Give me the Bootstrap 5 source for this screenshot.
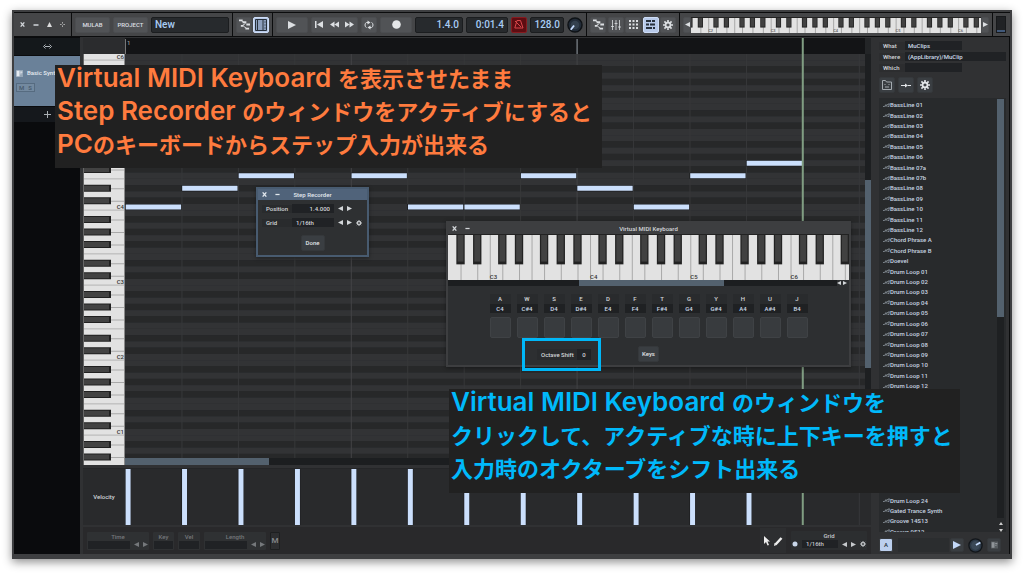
<!DOCTYPE html>
<html lang="ja">
<head>
<meta charset="utf-8">
<meta name="viewport" content="width=device-width, initial-scale=1">
<title>MuLab – Step Recorder</title>
<link rel="stylesheet" href="https://cdn.jsdelivr.net/npm/bootstrap@5.3.0/dist/css/bootstrap.min.css">
<script src="https://cdn.jsdelivr.net/npm/bootstrap@5.3.0/dist/js/bootstrap.bundle.min.js"></script>
<style>
body{background:#fff;font:500 6px/8px Roboto,"Noto Sans CJK JP",sans-serif;color:#d2d6da}
svg{display:block}
.app{margin:10px 12px 14px;height:calc(100vh - 24px);min-height:460px;border:2px solid #3e3f41;border-bottom-width:5px;background:#303133;box-shadow:0 3px 9px rgba(0,0,0,.45)}
button,input{font:inherit;color:inherit;padding:0;border:0;min-width:0}
.toolbar{background:#0b0c0d;padding:1px 0;gap:1px;height:25px}
.seg{background:#454648;gap:3px;padding:0 3px;height:23px;flex-shrink:0}
.key{background:#515356;border:1px solid #4b4d50;border-radius:2px;display:flex;align-items:center;justify-content:center;height:16px;color:#dcdfe2;flex-shrink:0}
.key.on{background:#b7c9e8;border-color:#cddcf5;color:#27303b}
.key.red{background:#5d0d12;border-color:#871a1f;color:#d8474b}
.lcd{background:#272a2d;border:1px solid #1b1d1f;border-radius:2px;height:16px;color:#a9cdf5;font-size:10px;line-height:14px;padding:0 3px}
.plain{background:none;display:flex;align-items:center;justify-content:center}
.w8{width:8px}.w10{width:10px}.w16{width:16px}.w32{width:32px}.w34{width:34px}.w35{width:35px}.w42{width:42px}.w47{width:47px}.w48{width:48px}
.seg-win{width:57px}.seg-name{width:160px}.seg-view{width:39px;gap:1px}.seg-play{width:313px}.seg-pan{width:92px;gap:1px}.seg-mini{flex:1 1 0;min-width:0}.seg-level{width:17px}
.level{width:10px;height:17px;background:#202225;border:1px solid #17191b;display:flex;align-items:end}
.level i{flex:1;height:2px;background:#41597a}
.keys-h{position:relative;background:#e2e2e2;overflow:hidden}
.klabel{position:absolute;bottom:0;color:#333;font-size:6px;line-height:7px}
.tiny-keys{height:16px}
.tiny-keys .klabel{font-size:4px;line-height:5px;color:#666}
.tracks{width:66px;background:#0a0b0d}
.tracks .head{height:17px;background:#14181b;margin-top:1px}
.track{height:50px;background:#6a8199;color:#e6ecf2;margin-top:1px;padding:13px 0 0 2px}
.ms{width:19px;height:9px;border:1px solid #566b80;background:#73899f;color:#46586a;margin-top:6px}
.addtrack{height:15px;background:#15181c;color:#aaafb4;margin-top:1px}
.center-col{margin:1px 0 0 3px}
.ruler{height:16px;background:#131416}
.corner{width:42px;background:#2b2c2e}
.gut{width:6px;background:#1d1f21}
.gut.top{background:#232527}
.vthumb{height:188px;margin-top:126px;background:#53616e}
.roll{background:#252628}
.hbar{height:7px;background:#1c1e20}.hbar div{background:#53616e;height:100%}
.velo{height:57px;background:#292a2c;margin-top:3px;border-top:1px solid #252628}
.foot{height:27px;background:#29292b;margin-top:2px}
.grp{background:#2f3133;color:#75787b;border-radius:1px;height:18px;padding:1px}
.dark{background:#202225}
.grp input{height:8px}
.grp.wide{width:62px}
.grp.grid-box{width:76px;margin-right:4px;height:19px;color:#c6c9cc;background:#2c2e30}
.mbtn{height:18px;font-size:8px;background:#2d2e30;border:1px solid #1d1f20;border-radius:1px;color:#85888b}
.tools{width:26px;height:25px;background:#2d2e30;margin-right:5px}
.side{width:136px;background:#303133;padding:4px 3px 0 5px;border-right:1px solid #0b0c0d;margin-left:3px}
.field{height:9px;margin-bottom:2px}
.field label{width:26px;padding-left:4px;background:#2c2d2f}
.field input{height:9px;background:#202225;color:#cddae8;padding-left:3px}
.short{width:57px}
.sbtn{width:16px;height:16px;background:#3a3e42;border:1px solid #35383b;border-radius:2px;color:#e2e5e8;display:flex;align-items:center;justify-content:center}
.sbtn.sq{width:14px;height:14px;flex-shrink:0}
.sbtn.lit{background:#bccfee;color:#27303b}
.sbtns{gap:3px;margin:3px 0 5px}
.listbox{background:#282a2c;padding:1px 2px 0 4px;overflow:hidden}
.clips{height:438px;padding-top:1px;display:grid;grid-auto-rows:1fr;align-items:center;color:#c9d5e2}
.clips li{display:flex;align-items:center}
.lbar{width:7px;background:#1e2022}.lbar div{height:218px;background:#53616e}
.larrows{height:14px}
.sfoot{height:21px;padding:5px 5px 0 0;margin-bottom:1px}
.slot{height:14px;background:#2b2d2f;margin:0 1px 0 5px}
.win{position:absolute;color:#d4d7da;box-shadow:0 1px 4px rgba(0,0,0,.4)}
.step{left:242px;top:175px;width:113px;height:70px;border:2px solid #485b70;background:#2e3032}
.step header{height:11px;background:#50637a;color:#e2e8ee}
.step .line{height:9px;margin:4px 0 5px 4px;gap:4px}
.step label{width:30px;padding-left:4px;margin-right:-4px;background:#292b2d}
.step input{width:42px;height:9px}
.step .sbtn{width:24px;margin-top:8px}
.vmk{left:432px;top:209px;width:405px;height:146px;border:2px solid #3d3e40;background:#2d2f31}
.vmk header{height:11px;background:#3d3e40}
.vmk .keys-h{height:46px}
.kscroll{height:6px;background:#1c1e20}
.pads{display:grid;grid-template-columns:repeat(12,21px);column-gap:6px;justify-content:center;text-align:center;margin-top:8px}
.pads label{height:10px;line-height:10px;background:#292b2d}
.pads output{height:9px;line-height:9px;background:#1f2123;color:#cddae8}
.pads button{height:21px;margin-top:4px;background:#383b3e;border:1px solid #3f4245;border-radius:2px}
.octrow{margin-top:8px;padding-left:89px}
.octrow label{width:40px;padding-left:4px;height:11px;line-height:11px;background:#292b2d}
.octrow input{width:14px;height:11px}
.octrow button{width:21px;margin-left:47px}
.mark-oct{position:absolute;left:74px;top:115px;width:79px;height:33px;border:3px solid #00b7f7}
.note{position:absolute;background:#212121;font:700 22px/25px "Noto Sans CJK JP",sans-serif;padding:0 2px;white-space:nowrap}
.note b{font:600 26px/25px Inter,"Liberation Sans",sans-serif}
.n1{left:41px;top:53px;width:547px;height:103px;color:#ff7b3e}
.n2{left:435px;top:377px;width:511px;height:104px;color:#00b9fb}
.note p{margin:0 0 8px;height:25px}
</style>
</head>
<body>
<svg width="0" height="0" class="position-absolute" aria-hidden="true">
 <symbol id="gear" viewBox="0 0 16 16"><path fill="none" stroke="currentColor" stroke-width="3" d="M8 4a4 4 0 1 0 .01 0z"/><path stroke="currentColor" stroke-width="2.6" d="M8 0v3M8 13v3M0 8h3M13 8h3M2.3 2.3l2.2 2.2M11.5 11.5l2.2 2.2M13.7 2.3l-2.2 2.2M4.5 11.5l-2.2 2.2"/></symbol>
 <symbol id="lt" viewBox="0 0 6 6"><path fill="currentColor" d="M6 0v6L0 3z"/></symbol>
 <symbol id="rt" viewBox="0 0 6 6"><path fill="currentColor" d="M0 0v6l6-3z"/></symbol>
 <symbol id="x" viewBox="0 0 6 6"><path stroke="currentColor" stroke-width="1.6" d="M.8.5l4.400 5M5.200.5L.8 5.500"/></symbol>
 <symbol id="min" viewBox="0 0 6 6"><path stroke="currentColor" stroke-width="1.500" d="M.5 3h5"/></symbol>
 <symbol id="rack" viewBox="0 0 12 12"><path fill="none" stroke="currentColor" d="M3 2.500L6 4M7 5L3 7.500M5 8l3 2"/><path stroke="currentColor" stroke-width="2" d="M0 1.500h4M4 3.500h4M8 6h4M2 7.500h3M7 10.500h4"/></symbol>
 <symbol id="mod" viewBox="0 0 10 10"><path fill="currentColor" opacity=".35" d="M0 0h10v10H0z"/><path fill="currentColor" d="M1 1h4v8H1zM6 2h3v2H6zM6 5h2v1H6z"/></symbol>
</svg>

<div class="app position-relative d-flex flex-column">
 <nav class="toolbar d-flex" aria-label="Transport">
  <div class="seg seg-win d-flex align-items-center justify-content-around">
   <button class="plain" aria-label="Close"><svg width="5" height="5"><use href="#x"/></svg></button>
   <button class="plain" aria-label="Minimise"><svg width="6" height="6"><use href="#min"/></svg></button>
   <button class="plain" aria-label="Up"><svg width="5" height="5" viewBox="0 0 5 5"><path fill="#ddd" d="M2.500 0L5 5H0z"/></svg></button>
   <button class="plain" aria-label="Move"><svg width="5" height="5" viewBox="0 0 6 6"><path stroke="#bbb" d="M3 0v2M3 4v2M0 3h2M4 3h2"/></svg></button>
  </div>
  <div class="seg seg-name d-flex align-items-center">
   <button class="key w35">MULAB</button><button class="key w35">PROJECT</button>
   <input class="lcd flex-fill w-25" value="New" aria-label="Project name">
  </div>
  <div class="seg seg-view d-flex align-items-center">
   <button class="key w16" aria-label="Rack"><svg width="11" height="11"><use href="#rack"/></svg></button>
   <button class="key on w16" aria-label="Editor"><svg width="12" height="12" viewBox="0 0 12 12"><path fill="#8d9fbd" stroke="currentColor" d="M.5.500h11v11H.5z"/><path stroke="currentColor" d="M2.500 1v10M8 1v10M9.500 3h1M9.500 6h1M9.500 9h1"/></svg></button>
  </div>
  <div class="seg seg-play d-flex align-items-center">
   <button class="key w32" aria-label="Play"><svg width="8" height="8"><use href="#rt"/></svg></button>
   <div class="key w47 justify-content-around">
    <button class="plain" aria-label="Start"><svg width="9" height="7" viewBox="0 0 9 7"><path fill="#dcdfe2" d="M0 0h1.500v7H0zM8 0v7L2 3.500z"/></svg></button>
    <button class="plain" aria-label="Rewind"><svg width="9" height="7" viewBox="0 0 9 7"><path fill="#dcdfe2" d="M4.500.5v6L0 3.500zM9 .5v6L4.500 3.500z"/></svg></button>
    <button class="plain" aria-label="Forward"><svg width="9" height="7" viewBox="0 0 9 7"><path fill="#dcdfe2" d="M0 .5v6l4.500-3zM4.500.5v6l4.500-3z"/></svg></button>
   </div>
   <button class="key w16" aria-label="Loop"><svg width="10" height="10" viewBox="0 0 10 10"><path fill="none" stroke="currentColor" d="M4 2.500H2.500Q1 3 1 5t1.500 2.500M6 7.500h1.500Q9 7 9 5T7.500 2.500"/><path fill="currentColor" d="M3.500.5L6.500 2.500l-3 2zM6.500 5.500L3.500 7.500l3 2z"/></svg></button>
   <button class="key w32" aria-label="Record"><svg width="9" height="9" viewBox="0 0 9 9"><circle cx="4.500" cy="4.500" r="4.300" fill="#e4e6e8"/></svg></button>
   <input class="lcd text-end w48" value="1.4.0" aria-label="Position">
   <input class="lcd text-end w42" value="0:01.4" aria-label="Time">
   <button class="key red w16" aria-label="Metronome"><svg width="10" height="9" viewBox="0 0 10 9"><path fill="none" stroke="currentColor" d="M3 .5h3.500L9 8H.8zM1 1l6 6"/></svg></button>
   <input class="lcd text-end w34" value="128.0" aria-label="Tempo">
   <svg class="flex-shrink-0" width="16" height="16" viewBox="0 0 17 17"><circle cx="8.500" cy="8.500" r="7.500" fill="#222c38" stroke="#0e1216" stroke-width="1.500"/><circle cx="8.500" cy="8.500" r="4.500" fill="#34414f"/><path stroke="#c6dcff" stroke-width="2" d="M7.500 9L4 13.500"/></svg>
  </div>
  <div class="seg seg-pan d-flex align-items-center justify-content-between">
   <button class="key w16" aria-label="Rack view"><svg width="11" height="11"><use href="#rack"/></svg></button>
   <button class="key w16" aria-label="Mixer"><svg width="10" height="10" viewBox="0 0 10 10"><path stroke="currentColor" stroke-width=".8" d="M1.500 0v10M5 0v10M8.500 0v10M0 6.500h3M3.500 3.500h3M7 7h3"/></svg></button>
   <button class="key w16" aria-label="Pads"><svg width="9" height="9" viewBox="0 0 9 9"><path stroke="currentColor" stroke-width="2" stroke-dasharray="2 1.500" d="M0 1h9M0 4.500h9M0 8h9"/></svg></button>
   <button class="key on w16" aria-label="Sequence"><svg width="9" height="9" viewBox="0 0 9 9"><path stroke="currentColor" stroke-width="2" d="M0 1h5M6 1h3M0 4.500h3M4 4.500h5M0 8h6M7 8h2"/></svg></button>
   <button class="key w16" aria-label="Settings"><svg width="10" height="10"><use href="#gear"/></svg></button>
  </div>
  <div class="seg seg-mini d-flex align-items-center gap-0">
   <button class="key w8" aria-label="Lower"><svg width="5" height="5"><use href="#lt"/></svg></button>
   <div class="keys-h tiny-keys flex-fill" data-keys="55.7" data-first="-3.3" data-oct="2"></div>
   <button class="key w8" aria-label="Higher"><svg width="5" height="5"><use href="#rt"/></svg></button>
  </div>
  <div class="seg seg-level d-flex align-items-center"><div class="level"><i></i></div></div>
 </nav>

 <main class="d-flex flex-fill overflow-hidden">
  <aside class="tracks flex-shrink-0">
   <div class="head d-flex align-items-center justify-content-center"><svg width="9" height="5" viewBox="0 0 9 5"><path stroke="#aeb4ba" fill="none" d="M2.500.5l-2 2 2 2M6.500.5l2 2-2 2M2 2.500h5"/></svg></div>
   <div class="track">
    <div class="d-flex align-items-center gap-1 text-nowrap"><svg width="7" height="7" class="flex-shrink-0"><use href="#mod"/></svg><span>Basic Synth</span></div>
    <div class="ms d-flex justify-content-around align-items-center"><span>M</span><span>S</span></div>
   </div>
   <button class="addtrack w-100 d-flex align-items-center justify-content-center" aria-label="Add track"><svg width="7" height="7" viewBox="0 0 7 7"><path stroke="currentColor" d="M3.500 0v7M0 3.500h7"/></svg></button>
  </aside>

  <section class="center-col flex-fill d-flex flex-column overflow-hidden">
   <div class="d-flex"><div class="corner"></div><svg id="ruler" class="ruler flex-fill" width="100"></svg><div class="gut top"></div></div>
   <div class="d-flex flex-fill overflow-hidden">
    <svg id="vkeys" width="42" height="100%" class="flex-shrink-0"></svg>
    <div class="flex-fill d-flex flex-column">
     <div class="roll flex-fill position-relative overflow-hidden"><svg id="roll" class="position-absolute w-100 h-100"></svg></div>
     <div class="hbar"><div style="width:19.4%"></div></div>
    </div>
    <div class="gut flex-shrink-0"><div class="vthumb"></div></div>
   </div>
   <div class="velo d-flex flex-shrink-0"><div class="w42 flex-shrink-0 d-flex align-items-center justify-content-center">Velocity</div><svg id="velo" class="flex-fill" width="100" height="56"></svg><div class="gut opacity-0"></div></div>
   <div class="foot d-flex flex-shrink-0 align-items-center">
    <div class="d-flex h-100 align-items-center gap-1 px-1">
     <div class="grp wide text-center"><label class="d-block" for="t">Time</label><div class="d-flex align-items-center gap-1"><input id="t" class="dark w42"><svg width="5" height="5"><use href="#lt"/></svg><svg width="5" height="5"><use href="#rt"/></svg></div></div>
     <div class="grp text-center"><label class="d-block" for="k">Key</label><input id="k" class="dark d-block" style="width:19px"></div>
     <div class="grp text-center"><label class="d-block" for="v">Vel</label><input id="v" class="dark d-block" style="width:20px"></div>
     <div class="grp wide text-center"><label class="d-block" for="l">Length</label><div class="d-flex align-items-center gap-1"><input id="l" class="dark w42"><svg width="5" height="5"><use href="#lt"/></svg><svg width="5" height="5"><use href="#rt"/></svg></div></div>
     <button class="mbtn w10">M</button>
    </div>
    <div class="tools ms-auto d-flex align-items-center justify-content-center gap-1">
     <svg width="6" height="10" viewBox="0 0 6 10"><path fill="#eee" d="M0 0v8l2-2 1.500 3.500L5 9 3.500 5.500H6z"/></svg>
     <svg width="9" height="10" viewBox="0 0 9 10"><path stroke="#eee" stroke-width="2.500" d="M1.500 8.500L7.500 2"/><path fill="#eee" d="M0 10l.5-3 2 2z"/></svg>
    </div>
    <div class="grp grid-box text-center"><label class="d-block" for="g">Grid</label><div class="d-flex align-items-center gap-1"><svg width="6" height="6" viewBox="0 0 6 6"><circle cx="3" cy="3" r="2.500" fill="#c9d7ea"/></svg><input id="g" class="dark ps-1" style="width:36px" value="1/16th"><svg width="5" height="5"><use href="#lt"/></svg><svg width="5" height="5"><use href="#rt"/></svg><svg width="6" height="6"><use href="#gear"/></svg></div></div>
   </div>
  </section>

  <aside class="side flex-shrink-0 d-flex flex-column">
   <div class="field d-flex align-items-center"><label for="f1">What</label><input id="f1" class="short" value="MuClips"></div>
   <div class="field d-flex align-items-center"><label for="f2">Where</label><input id="f2" class="flex-fill" value="(AppLibrary)/MuClip"></div>
   <div class="field d-flex align-items-center"><label for="f3">Which</label><input id="f3" class="short"></div>
   <div class="sbtns d-flex">
    <button class="sbtn" aria-label="Folder"><svg width="10" height="10" viewBox="0 0 10 10"><path fill="none" stroke="#a5abb0" d="M.5 9.500v-9h3l1 1.500h5v7.500zM3 4v1M7 4v1M3 7h4"/></svg></button>
    <button class="sbtn" aria-label="Insert"><svg width="10" height="5" viewBox="0 0 10 5"><path stroke="currentColor" d="M0 2.500h4M7 2.500h3"/><path fill="currentColor" d="M4 .5l3 2-3 2z"/></svg></button>
    <button class="sbtn" aria-label="Options"><svg width="10" height="10"><use href="#gear"/></svg></button>
   </div>
   <div class="listbox d-flex flex-fill">
    <ul id="clips" class="clips list-unstyled mb-0 flex-fill"></ul>
    <div class="d-flex flex-column"><div class="lbar flex-fill"><div></div></div>
     <div class="larrows d-flex flex-column align-items-center gap-1 pt-1"><svg width="4" height="3" viewBox="0 0 4 3"><path fill="#ccc" d="M2 0l2 3H0z"/></svg><svg width="4" height="3" viewBox="0 0 4 3"><path fill="#ccc" d="M0 0h4L2 3z"/></svg></div></div>
   </div>
   <div class="sfoot d-flex align-items-center flex-shrink-0">
    <button class="sbtn sq lit">A</button>
    <div class="slot flex-fill"></div>
    <button class="sbtn sq me-1" aria-label="Preview"><svg width="8" height="8" color="#c3d8f8"><use href="#rt"/></svg></button>
    <svg class="flex-shrink-0 me-1" width="15" height="15" viewBox="0 0 17 17"><circle cx="8.500" cy="8.500" r="7.500" fill="#2c3846" stroke="#12161a" stroke-width="1.500"/><circle cx="8.500" cy="8.500" r="5" fill="#3a4857"/><path stroke="#c6dcff" stroke-width="2" d="M9 8l5-3"/></svg>
    <button class="sbtn sq" aria-label="Module"><svg width="7" height="8" color="#909599"><use href="#mod"/></svg></button>
   </div>
  </aside>
 </main>

 <section class="win step" aria-label="Step Recorder">
  <header class="d-flex align-items-center position-relative"><svg class="ms-1" width="5" height="5"><use href="#x"/></svg><svg class="ms-2" width="5" height="5"><use href="#min"/></svg><span class="position-absolute w-100 text-center">Step Recorder</span></header>
  <div class="line d-flex align-items-center"><label for="sp">Position</label><input id="sp" class="dark text-end pe-1" value="1.4.000"><svg width="5" height="5"><use href="#lt"/></svg><svg width="5" height="5"><use href="#rt"/></svg></div>
  <div class="line d-flex align-items-center"><label for="sg">Grid</label><input id="sg" class="dark ps-1" value="1/16th"><svg width="5" height="5"><use href="#lt"/></svg><svg width="5" height="5"><use href="#rt"/></svg><svg width="6" height="6"><use href="#gear"/></svg></div>
  <button class="sbtn mx-auto">Done</button>
 </section>

 <section class="win vmk" aria-label="Virtual MIDI Keyboard">
  <header class="d-flex align-items-center position-relative"><svg class="ms-1" width="5" height="5"><use href="#x"/></svg><svg class="ms-2" width="5" height="5"><use href="#min"/></svg><span class="position-absolute w-100 text-center">Virtual MIDI Keyboard</span></header>
  <div class="keys-h" data-keys="48" data-first="-5" data-oct="3"></div>
  <div class="kscroll d-flex align-items-center"><div class="h-100" style="width:36.2%;margin-left:32.6%;background:#53616e"></div><div class="h-100 ms-auto d-flex align-items-center" style="width:12px;gap:2px;background:#2d2f31"><svg width="4" height="4"><use href="#lt"/></svg><svg width="4" height="4"><use href="#rt"/></svg></div></div>
  <div id="pads" class="pads"></div>
  <div class="octrow d-flex align-items-center">
   <label for="oct" class="text-nowrap">Octave Shift</label><input id="oct" class="dark text-center" value="0">
   <button class="sbtn">Keys</button>
  </div>
  <div class="mark-oct"></div>
 </section>

 <div class="note n1"><p><b>Virtual MIDI Keyboard </b>を表示させたまま</p><p><b>Step Recorder </b>のウィンドウをアクティブにすると</p><p><b>PC</b>のキーボードからステップ入力が出来る</p></div>
 <div class="note n2"><p><b>Virtual MIDI Keyboard </b>のウィンドウを</p><p>クリックして、アクティブな時に上下キーを押すと</p><p>入力時のオクターブをシフト出来る</p></div>
</div>

<script>
const isBlack = k => [1,3,6,8,10].includes(((k % 12) + 12) % 12);
const rect = (x,y,w,h,f) => `<rect x="${x}" y="${y}" width="${w}" height="${h}" fill="${f}"/>`;

// horizontal keyboards: one slot per semitone, k = 0 is the first labelled C
document.querySelectorAll('[data-keys]').forEach(el => {
  const n = +el.dataset.keys, first = +el.dataset.first;
  const pc = k => ((k - first) / n * 100).toFixed(3) + '%', w = (100 / n).toFixed(3) + '%';
  let lines = '', blacks = '', labels = '';
  for (let k = Math.floor(first); k < first + n; k++) {
    const m = ((k % 12) + 12) % 12;
    if (isBlack(k)) {
      lines += rect(pc(k + .5), 0, 1, '100%', '#a9a9a9');
      blacks += rect(pc(k), 0, w, '66%', '#222') + rect(pc(k + .15), 0, (70 / n) + '%', '60%', '#414141');
    } else if (m === 0 || m === 5) lines += rect(pc(k), 0, 1, '100%', '#a9a9a9');
    if (m === 0) labels += `<span class="klabel" style="left:${pc(k)}">C${+el.dataset.oct + k / 12}</span>`;
  }
  el.innerHTML = `<svg width="100%" height="100%">${lines}${blacks}${rect(0,0,'100%',1,'#222')}</svg>${labels}`;
});

// piano roll: C4 row is centred 153px below the top, an octave is 75px high
const STEP = 6.25, C4 = 153, COL = 7.628, yc = k => C4 - k * STEP;
let wl = rect(0, 0, 42, '100%', '#e2e2e2'), bk = '', lab = '', rows = '';
for (let k = 24; k > -66; k--) {
  const m = ((k % 12) + 12) % 12, y = yc(k);
  rows += rect(0, y - STEP / 2, '100%', STEP, isBlack(k) ? '#272829' : '#323335');
  if (isBlack(k)) { wl += rect(0, y, 42, 1, '#a9a9a9'); bk += rect(0, y - 3.5, 28, 7, '#202020') + rect(1, y - 2.5, 25, 5, '#424242'); }
  else if (m === 0 || m === 5) wl += rect(0, y + 2.6, 42, 1, '#b4b4b4');
  if (m === 0 && k !== 12 && k > -40) lab += `<text x="41" y="${y + 2}" text-anchor="end" font-size="6" fill="#333">C${4 + k / 12}</text>`;
}
document.getElementById('vkeys').innerHTML = wl + bk + lab + rect(0, 0, 1, '100%', '#666') + rect(41, 0, 1, '100%', '#8a8a8a');
const notes = [0,3,5,8,5,0,0,5,3,0,5,7];
let cols = '', ns = '', vel = '';
for (let i = 1; i < 14; i++) cols += rect(i * COL + '%', 0, 1, '100%', i % 4 ? '#37383a' : '#434446');
notes.forEach((k, i) => {
  ns += rect(i * COL + '%', yc(k) - 3, COL + '%', 6, '#15171a') + rect((i * COL + .1) + '%', yc(k) - 2.5, (COL - .15) + '%', 5, '#cbdffc');
  vel += rect(i * COL + '%', 0, 6, 56, '#191b1e') + rect((i * COL + .08) + '%', 0, 5, 56, '#cbdffc');
});
const head = rect((12 * COL - .08) + '%', 0, 2, '100%', '#809d82');
document.getElementById('roll').innerHTML = rows + cols + ns + head;
document.getElementById('velo').innerHTML = rect(13 * COL + '%', 0, 1, '100%', '#37383a') + vel + head;
document.getElementById('ruler').innerHTML = rect(0, 1, 1, 15, '#777') + rect(8 * COL + '%', 1, 1, 15, '#9aa2aa') + '<text x="2" y="7" font-size="6" fill="#999">1</text>' + head;

const pad2 = n => String(n).padStart(2, '0');
const icon = '<svg width="7" height="5" viewBox="0 0 7 5"><path fill="none" stroke="#8d979f" stroke-width=".8" d="M0 3.500h1.500L3 1.500v2L5 1h2M4.500 3.500H6V1"/></svg>';
const clips = ['01','02','03','04','05','06','07a','07b','08','09','10','11','12'].map(n => 'BassLine ' + n)
  .concat('Chord Phrase A', 'Chord Phrase B', 'Doevel', Array.from({length: 12}, (_, i) => 'Drum Loop ' + pad2(i + 1)), Array(10).fill(''), 'Drum Loop 24', 'Gated Trance Synth', 'Groove 14S13', 'Groove 9S12');
document.getElementById('clips').innerHTML = clips.map(c => `<li>${c && icon + c}</li>`).join('');

const kk = 'AWSEDFTGYHUJ', nn = ['C','C#','D','D#','E','F','F#','G','G#','A','A#','B'];
document.getElementById('pads').innerHTML = [...kk].map((c, i) => `<div class="d-flex flex-column"><label for="p${c}">${c}</label><output>${nn[i]}4</output><button id="p${c}"></button></div>`).join('');
</script>
</body>
</html>
